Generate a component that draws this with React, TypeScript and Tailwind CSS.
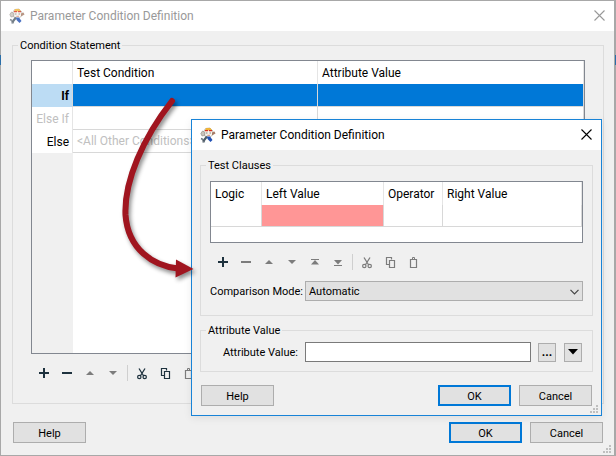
import type { ReactNode } from "react";

const uiFont = "font-[Roboto,'Noto_Sans',sans-serif]";

function AppIcon({ faded = false }: { faded?: boolean }) {
  return (
    <svg width="16" height="16" viewBox="0 0 16 16" className={faded ? "opacity-80" : ""} aria-hidden="true">
      <path d="M3.500 5 5.500 1.500 10 1 13 4 12.500 8 9.500 10.500 5.500 10Z" fill="#f6f3ee" stroke="#b0aaa2" strokeWidth=".8" />
      <path d="M4.800 3.500 6.200 1 10.400 1 12 3.500Z" fill="#f0b437" />
      <path d="M5 3.600h3M9 3.600h3" stroke="#d8311f" strokeWidth="1.200" />
      <path d="M6 6h1.500M9.500 6H11" stroke="#8d8378" strokeWidth="1" />
      <path d="M7.300 8.300h2.700" stroke="#d8896c" strokeWidth="1" />
      <path d="M.8 6.500 2.500 4 5 5.500 4.500 8.500 2 9Z" fill="#c9c3bc" stroke="#8b857e" strokeWidth=".6" />
      <path d="M12 5.500 14.500 4.500 15.500 6.500 12 8.500Z" fill="#a67c66" />
      <path d="M3 14.500 7 9.500" stroke="#4d5b66" strokeWidth="2.200" />
      <path d="M1 11.500 3 12.500M2.500 15 5 14.500" stroke="#6b7680" strokeWidth="1.500" />
      <path d="M7 9.500 10 9.500 12.500 13 10.500 15 7.500 12Z" fill="#1f4fb4" />
    </svg>
  );
}

function TitleBar({ active = false }: { active?: boolean }) {
  return (
    <header className="flex h-[30px] shrink-0 items-center bg-white pl-2 pr-[9px]">
      <AppIcon faded={!active} />
      <h1 className={`ml-[5px] flex-1 text-[12px] leading-4 ${active ? "text-black" : "text-[#999999]"}`}>
        Parameter Condition Definition
      </h1>
      <button type="button" aria-label="Close" className={`pb-0.5 ${active ? "text-black" : "text-[#999999]"}`}>
        <svg width="11" height="11" viewBox="0 0 11 11" fill="none" stroke="currentColor" strokeWidth="1.100">
          <path d="M.5.5l10 10M10.500.5l-10 10" />
        </svg>
      </button>
    </header>
  );
}

function Tool({ label, disabled, children }: { label: string; disabled?: boolean; children: ReactNode }) {
  return (
    <button
      type="button"
      aria-label={label}
      disabled={disabled}
      className={`flex h-6 w-[23px] shrink-0 items-center justify-center ${disabled ? "text-[#7c7c7c]" : "text-[#1e323e]"}`}
    >
      <svg width="15" height="15" viewBox="0 0 15 15" fill="none" stroke="currentColor">
        {children}
      </svg>
    </button>
  );
}

function Toolbar({ extended = false }: { extended?: boolean }) {
  return (
    <div className="flex h-6 items-center overflow-hidden pl-0.5">
      <Tool label="Add">
        <path d="M7 2v10M2 7h10" strokeWidth="2" />
      </Tool>
      <Tool label="Remove" disabled={extended}>
        <path d="M2 7h10" strokeWidth="2" />
      </Tool>
      <Tool label="Move up" disabled>
        <path d="M3 9 7 5l4 4Z" fill="currentColor" stroke="none" />
      </Tool>
      <Tool label="Move down" disabled>
        <path d="M3 5 7 9l4-4Z" fill="currentColor" stroke="none" />
      </Tool>
      {extended && (
        <>
          <Tool label="Move to top" disabled>
            <path d="M3 4.500h8" />
            <path d="M3 9.500 7 5l4 4.500Z" fill="currentColor" stroke="none" />
          </Tool>
          <Tool label="Move to bottom" disabled>
            <path d="M3 10.500h8" />
            <path d="M3 5 7 9.500l4-4.500Z" fill="currentColor" stroke="none" />
          </Tool>
        </>
      )}
      <span className="ml-0.5 mr-[3px] h-4 w-px shrink-0 bg-[#cfcfcf]" />
      <Tool label="Cut" disabled={extended}>
        <path d="M4 2.500 8.700 10M10 2.500 5.300 10" strokeWidth="1.300" />
        <circle cx="4.300" cy="11" r="1.700" strokeWidth="1.200" />
        <circle cx="9.700" cy="11" r="1.700" strokeWidth="1.200" />
      </Tool>
      <Tool label="Copy" disabled={extended}>
        <path d="M6.500 9.500h-3v-7h5v2M6.500 5.500h5v7h-5Z" strokeWidth="1.200" />
      </Tool>
      <Tool label="Paste" disabled>
        <path d="M6 4.500H4.500v8h6v-8H9" strokeWidth="1.200" />
        <path d="M5.500 4.500h4M6.500 4.500v-2h2v2" strokeWidth="1" />
      </Tool>
    </div>
  );
}

function PushButton({ children, primary }: { children: ReactNode; primary?: boolean }) {
  return (
    <button
      type="button"
      className={`flex h-[21px] w-[73px] items-center justify-center bg-[#e1e1e1] pt-0.5 text-[11px] leading-4 ${
        primary ? "border-2 border-[#0078d7]" : "border border-[#adadad]"
      }`}
    >
      {children}
    </button>
  );
}

function ButtonRow() {
  return (
    <div className="flex items-center">
      <PushButton>Help</PushButton>
      <div className="ml-auto flex gap-2">
        <PushButton primary>OK</PushButton>
        <PushButton>Cancel</PushButton>
      </div>
    </div>
  );
}

function SizeGrip() {
  return (
    <svg width="8" height="8" viewBox="0 0 8 8" fill="#bfbfbf" className="absolute bottom-0.5 right-[3px]" aria-hidden="true">
      <path d="M6 0h2v2H6zM3 3h2v2H3zM6 3h2v2H6zM0 6h2v2H0zM3 6h2v2H3zM6 6h2v2H6z" />
    </svg>
  );
}

function ConditionTable() {
  return (
    <div className="flex flex-1 flex-col border border-[#828790] bg-white">
      <table className="w-full table-fixed border-separate border-spacing-0 text-[12px] leading-4">
        <colgroup>
          <col className="w-[41px]" />
          <col className="w-[245px]" />
          <col />
        </colgroup>
        <thead>
          <tr className="h-[23px] text-left">
            <th className="border-r border-[#e5e5e5] p-0" />
            <th className="border-r border-[#e5e5e5] p-0 pl-1 font-normal">Test Condition</th>
            <th className="border-r border-[#e5e5e5] p-0 pl-1 font-normal">Attribute Value</th>
          </tr>
        </thead>
        <tbody>
          <tr className="h-[23px]">
            <th className="border-r border-[#d8d8d8] bg-[#bcdcf4] p-0 pr-[3px] text-right font-bold">If</th>
            <td className="border-b border-r border-[#d8d8d8] bg-[#0078d7] bg-clip-padding p-0" />
            <td className="border-b border-r border-[#d8d8d8] bg-[#0078d7] bg-clip-padding p-0" />
          </tr>
          <tr className="h-[23px]">
            <th className="border-r border-[#e5e5e5] p-0 pr-[3px] text-right font-normal text-[#c0c0c0]">Else If</th>
            <td className="border-b border-r border-[#d8d8d8] p-0" />
            <td className="border-b border-r border-[#d8d8d8] p-0" />
          </tr>
          <tr className="h-[23px]">
            <th className="border-r border-[#e5e5e5] p-0 pr-[3px] text-right font-normal">Else</th>
            <td className="whitespace-nowrap border-b border-r border-[#d8d8d8] p-0 pl-1 text-[#c0c0c0]">
              &lt;All Other Conditions&gt;
            </td>
            <td className="border-b border-r border-[#d8d8d8] p-0" />
          </tr>
        </tbody>
      </table>
      <div className="w-[41px] flex-1 bg-[#f0f0f0]" />
    </div>
  );
}

function ClauseTable() {
  return (
    <div className="border border-[#828790] bg-white pb-[15px]">
      <table className="w-full table-fixed border-separate border-spacing-0 text-[12px] leading-4">
        <colgroup>
          <col className="w-[51px]" />
          <col className="w-[122px]" />
          <col className="w-[59px]" />
          <col />
        </colgroup>
        <thead>
          <tr className="h-[23px] text-left">
            {["Logic", "Left Value", "Operator", "Right Value"].map((name) => (
              <th key={name} className="border-r border-[#e5e5e5] p-0 pl-1 font-normal">
                {name}
              </th>
            ))}
          </tr>
        </thead>
        <tbody>
          <tr className="h-[22px]">
            <td className="border-b border-r border-[#d8d8d8] p-0" />
            <td className="border-b border-r border-[#d8d8d8] bg-[#ff9696] p-0" />
            <td className="border-b border-r border-[#d8d8d8] p-0" />
            <td className="border-b border-r border-[#d8d8d8] p-0" />
          </tr>
        </tbody>
      </table>
    </div>
  );
}

function ClauseDialog() {
  return (
    <section className="absolute left-[191px] right-[14px] top-[119px] border border-[#1883d7] bg-[#f0f0f0] shadow-[0_2px_8px_rgba(0,0,0,0.08)]">
      <TitleBar active />
      <div className="px-2 pb-[9px] pt-1.5 text-[11px] leading-4">
        <fieldset className="border border-[#dcdcdc] px-[5px] pb-3.5">
          <legend className="px-0.5 pt-0.5">Test Clauses</legend>
          <div className="px-1 pt-[7px]">
            <ClauseTable />
            <div className="mt-[7px] flex">
              <Toolbar extended />
            </div>
            <div className="mt-[7px] flex h-5 items-center">
              <label htmlFor="mode" className="w-[88px] whitespace-nowrap pt-0.5 text-right">
                Comparison Mode:
              </label>
              <div className="relative ml-[7px] h-5 flex-1">
                <select
                  id="mode"
                  className="h-5 w-full appearance-none rounded-none border border-[#adadad] bg-[#e1e1e1] px-[3px] pt-0.5 text-[11px] leading-4"
                >
                  <option>Automatic</option>
                </select>
                <svg
                  width="9"
                  height="6"
                  viewBox="0 0 9 6"
                  fill="none"
                  stroke="#444444"
                  strokeWidth="1.200"
                  className="pointer-events-none absolute right-1 top-2"
                >
                  <path d="M.5.8l4 4 4-4" />
                </svg>
              </div>
            </div>
          </div>
        </fieldset>
        <fieldset className="mt-[5px] border border-[#dcdcdc] px-[5px] pb-[9px]">
          <legend className="px-0.5 pt-0.5">Attribute Value</legend>
          <div className="flex items-center px-1 pt-[3px]">
            <label htmlFor="value" className="w-[88px] whitespace-nowrap pt-0.5 text-right">
              Attribute Value:
            </label>
            <input id="value" type="text" className="ml-[7px] h-5 min-w-0 flex-1 border border-[#7a7a7a] bg-white px-1" />
            <button
              type="button"
              aria-label="Browse"
              className="ml-[7px] h-[19px] w-[18px] border border-[#adadad] bg-[#e1e1e1] text-[12px] font-bold leading-4"
            >
              ...
            </button>
            <button
              type="button"
              aria-label="More options"
              className="ml-2 mr-px flex h-[19px] w-[18px] items-start justify-center border border-[#adadad] bg-[#e1e1e1] pt-[5px]"
            >
              <svg width="10" height="6" viewBox="0 0 10 6">
                <path d="M0 0h10L5 5.500Z" />
              </svg>
            </button>
          </div>
        </fieldset>
        <div className="mt-[13px] px-px">
          <ButtonRow />
        </div>
      </div>
      <SizeGrip />
    </section>
  );
}

function EdgeStrip() {
  return (
    <div className="flex w-px shrink-0 flex-col bg-[#a8a8a8]" aria-hidden="true">
      <span className="mt-[55px] h-2.5 bg-[#2a6ea8]" />
    </div>
  );
}

function PointerArrow() {
  return (
    <svg
      width="90"
      height="190"
      viewBox="0 0 90 190"
      className="absolute left-[115px] top-[93px] drop-shadow-[2px_3px_2px_rgba(0,0,0,0.45)]"
      aria-hidden="true"
    >
      <path d="M57 8C28 45 9 88 10.500 122C13 156 38 173 63 175.500" fill="none" stroke="#a0151f" strokeWidth="6" strokeLinecap="round" />
      <path d="M61 166.500 78.500 176 60.500 184.500Z" fill="#a0151f" />
    </svg>
  );
}

export default function App() {
  return (
    <main className={`relative flex min-h-screen w-full overflow-hidden text-black ${uiFont}`}>
      <EdgeStrip />
      <section className="relative flex min-w-0 flex-1 flex-col border-b border-r border-t border-[#a8a8a8] bg-[#f0f0f0]">
        <TitleBar />
        <div className="flex flex-1 flex-col pb-3 pl-[11px] pr-2.5 pt-[5px] text-[11px] leading-4">
          <fieldset className="flex flex-1 flex-col border border-[#dcdcdc] px-[5px] pb-[18px]">
            <legend className="px-0.5 pt-0.5">Condition Statement</legend>
            <div className="flex flex-1 flex-col px-[13px] pt-1.5">
              <ConditionTable />
              <div className="mt-[7px] flex">
                <Toolbar />
              </div>
            </div>
          </fieldset>
          <div className="mt-[18px] pl-px pr-px">
            <ButtonRow />
          </div>
        </div>
        <SizeGrip />
      </section>
      <EdgeStrip />
      <ClauseDialog />
      <PointerArrow />
    </main>
  );
}
